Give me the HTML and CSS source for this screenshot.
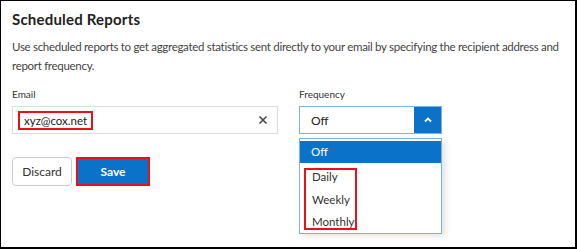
FILE: index.html
```html
<!DOCTYPE html>
<html lang="en">
<head>
  <meta charset="UTF-8">
  <title>Scheduled Reports</title>
  <link rel="stylesheet" href="styles.css">
</head>
<body>
  <div class="frame">
    <h1 class="title">Scheduled Reports</h1>
    <p class="intro">Use scheduled reports to get aggregated statistics sent directly to your email by specifying the recipient address and report frequency.</p>
    <div class="form">
      <div class="col col-email">
        <label class="label">Email</label>
        <div class="input">
          <span class="value mark">xyz@cox.net</span>
          <svg class="clear" width="10" height="10" viewBox="0 0 10 10"><path d="M1.5 1.5L8.5 8.5M8.5 1.5L1.5 8.5" stroke="#444" stroke-width="1.5" fill="none"/></svg>
        </div>
        <div class="actions">
          <button class="btn btn-discard">Discard</button>
          <button class="btn btn-save">Save</button>
        </div>
      </div>
      <div class="col col-freq">
        <label class="label">Frequency</label>
        <div class="select">
          <div class="select-box">
            <span class="select-value">Off</span>
            <span class="select-arrow">
              <svg width="10" height="8" viewBox="0 0 10 8"><path d="M2 5.5L5 2.5L8 5.5" stroke="#fff" stroke-width="1.8" fill="none"/></svg>
            </span>
          </div>
          <ul class="menu">
            <li class="active">Off</li>
            <li class="group">
              <span>Daily</span>
              <span>Weekly</span>
              <span>Monthly</span>
            </li>
          </ul>
        </div>
      </div>
    </div>
  </div>
</body>
</html>
```

FILE: styles.css
```css
body {
  margin: 0;
  font-family: "Lato", sans-serif;
  color: #333;
}
.frame {
  box-sizing: border-box;
  width: 577px;
  height: 249px;
  border: 1px solid #000;
  border-right-width: 2px;
  border-bottom-width: 2px;
  padding: 0 11px;
  background: #fff;
}
.title {
  margin: 9px 0 0;
  font-size: 15px;
  font-weight: 700;
  color: #222;
  letter-spacing: 0.2px;
}
.intro {
  margin: 9px 0 0;
  font-size: 11.5px;
  letter-spacing: -0.3px;
  line-height: 19px;
  color: #444;
}
.form {
  display: flex;
  gap: 21px;
  margin-top: 13px;
}
.col-email {
  width: 266px;
}
.col-freq {
  width: 143px;
}
.label {
  display: block;
  font-size: 10px;
  color: #333;
  height: 13px;
  margin-bottom: 5px;
}
.input {
  box-sizing: border-box;
  height: 28px;
  border: 1px solid #ddd;
  display: flex;
  align-items: center;
  justify-content: space-between;
  padding: 0 9px 0 5px;
}
.value {
  font-size: 11.5px;
  color: #222;
}
.mark {
  border: 2px solid #e8101a;
  padding: 1px 4px;
}
.clear {
  display: block;
}
.actions {
  display: flex;
  gap: 4px;
  margin-top: 23px;
}
.btn {
  box-sizing: border-box;
  height: 29px;
  font-family: "Lato", sans-serif;
  font-size: 12px;
  cursor: pointer;
}
.btn-discard {
  width: 60px;
  background: #fff;
  border: 1px solid #ccc;
  border-radius: 4px;
  color: #333;
}
.btn-save {
  width: 74px;
  background: #0a73c9;
  border: 2px solid #e8101a;
  color: #fff;
  font-weight: 700;
}
.select {
  position: relative;
}
.select-box {
  box-sizing: border-box;
  height: 28px;
  border: 1px solid #7fb2e0;
  display: flex;
  align-items: center;
}
.select-value {
  flex: 1;
  padding-left: 11px;
  font-size: 12px;
  color: #222;
}
.select-arrow {
  width: 27px;
  align-self: stretch;
  background: #0a73c9;
  display: flex;
  align-items: center;
  justify-content: center;
}
.menu {
  position: absolute;
  top: 32px;
  left: 0;
  box-sizing: border-box;
  width: 143px;
  margin: 0;
  padding: 2px 0 3px;
  list-style: none;
  border: 1px solid #7fb2e0;
  background: #fff;
  box-shadow: 3px 2px 6px rgba(0, 0, 0, 0.12);
  font-size: 11.5px;
}
.menu .active {
  background: #0a73c9;
  color: #fff;
  height: 22px;
  line-height: 22px;
  padding-left: 11px;
}
.menu .group {
  display: flex;
  flex-direction: column;
  gap: 10.5px;
  width: 38px;
  margin: 5px 0 0 4px;
  padding: 1px 5px 0 6px;
  border: 2px solid #e8101a;
}
.menu .group span {
  line-height: 12px;
  color: #333;
}
```
